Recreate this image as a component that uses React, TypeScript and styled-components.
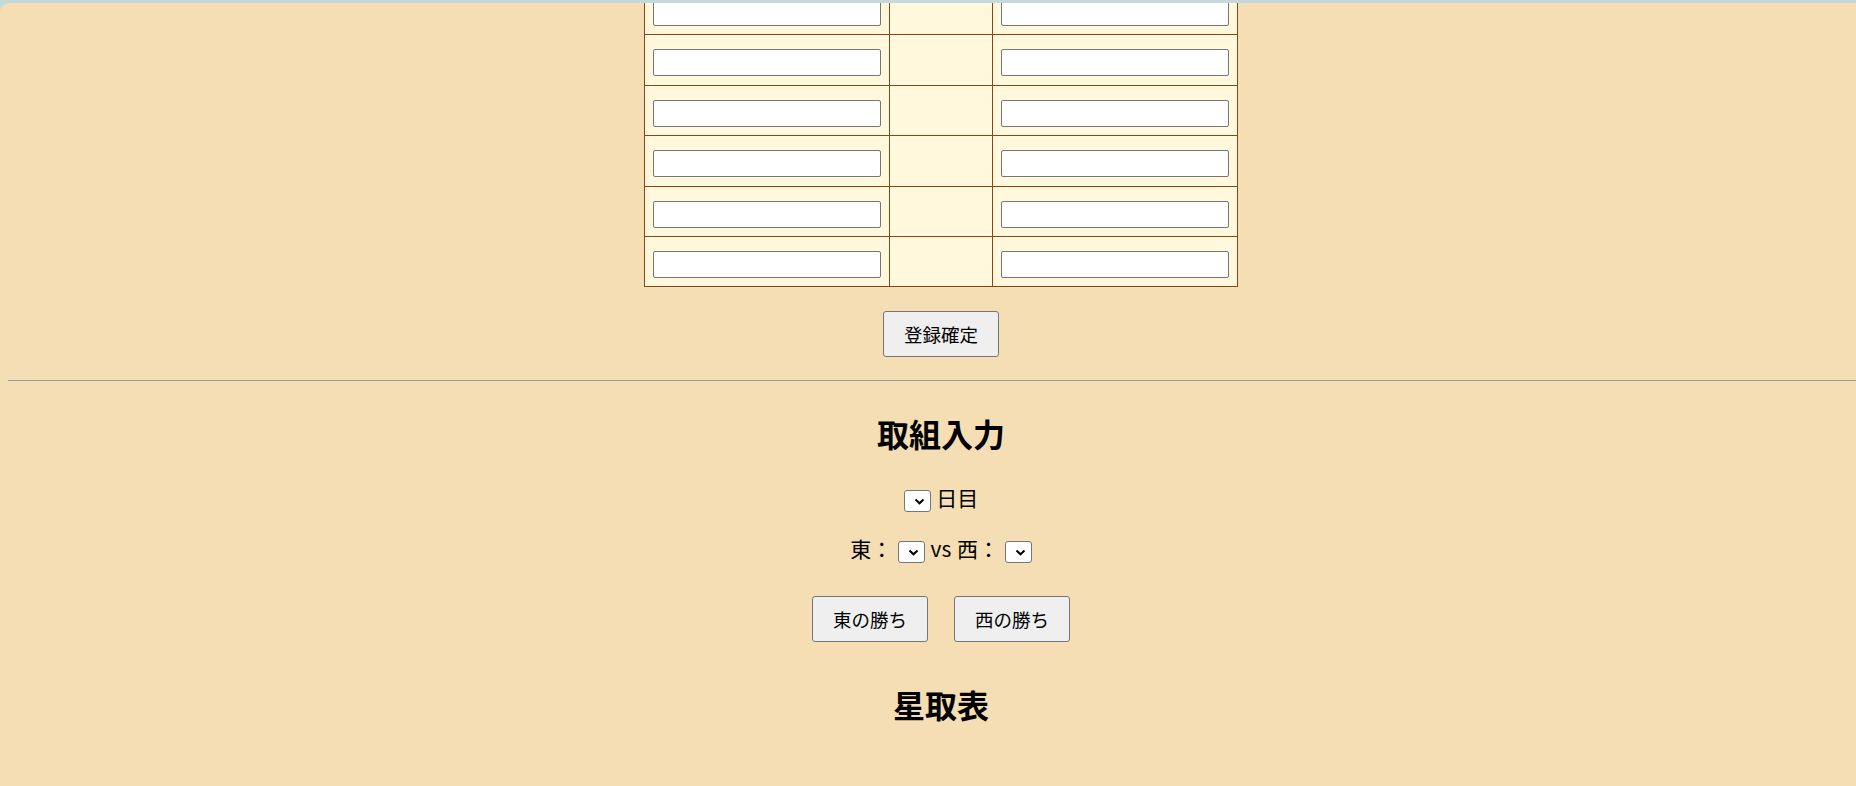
import React from "react";
import styled, { createGlobalStyle } from "styled-components";

const GlobalStyle = createGlobalStyle`
  html, body {
    margin: 0;
    padding: 0;
    overflow: hidden;
    background: #c3d9de;
  }
  body {
    font-family: "Noto Sans CJK JP", "Noto Sans", sans-serif;
    color: #000;
  }
`;

// browser window body, scrolled a little so the roster table is cut at the top
const Frame = styled.div`
  margin-top: 3px;
  width: 1882px;
  height: calc(100vh - 3px);
  background: #f5deb3;
  border-top-left-radius: 9px;
  overflow: hidden;
`;

const Page = styled.main`
  margin-top: -19px;
  padding: 0 8px;
`;

const Roster = styled.table`
  margin: 0 auto;
  border-collapse: collapse;
  background: #fff8dc;
`;

const Cell = styled.td<{ $middle?: boolean }>`
  border: 1px solid #8b4513;
  padding: ${(p) => (p.$middle ? "14px 0 8.4px" : "14px 8px 8.4px")};
  width: ${(p) => (p.$middle ? "102px" : "228px")};
`;

const NameInput = styled.input`
  display: block;
  box-sizing: border-box;
  width: 228px;
  height: 27px;
  margin: 0;
  padding: 1px 4px;
  border: 1px solid #767676;
  border-radius: 2px;
  background: #fff;
`;

const Actions = styled.div<{ $top: number }>`
  display: flex;
  justify-content: center;
  gap: 26px;
  margin-top: ${(p) => p.$top}px;
`;

const PushButton = styled.button`
  box-sizing: border-box;
  height: 46px;
  padding: 0 20px;
  font-family: "Noto Sans CJK JP", sans-serif;
  font-size: 18.5px;
  line-height: 24px;
  color: #000;
  background: #efefef;
  border: 1px solid #767676;
  border-radius: 3px;
`;

const Rule = styled.hr<{ $top: number }>`
  margin: ${(p) => p.$top}px 0 0;
  height: 0;
  border: none;
  border-top: 1px solid #9c9c9c;
`;

const SectionTitle = styled.h2<{ $top: number }>`
  margin: ${(p) => p.$top}px 0 0;
  text-align: center;
  font-size: 32px;
  font-weight: 700;
  line-height: 40px;
`;

const Line = styled.p<{ $top: number }>`
  margin: ${(p) => p.$top}px 0 0;
  text-align: center;
  font-size: 21px;
  line-height: 30px;
  word-spacing: 1px;
`;

const Picker = styled.span`
  position: relative;
  display: inline-block;
  vertical-align: middle;
  width: 27px;
  height: 22px;
`;

const PickerSelect = styled.select`
  appearance: none;
  display: block;
  box-sizing: border-box;
  width: 100%;
  height: 100%;
  margin: 0;
  padding: 0;
  border: 1px solid #767676;
  border-radius: 3px;
  background: #fff;
`;

const Chevron = styled.svg`
  position: absolute;
  left: 10px;
  top: 8px;
  pointer-events: none;
`;

const Select = () => (
  <Picker>
    <PickerSelect />
    <Chevron width="11" height="7" viewBox="0 0 11 7">
      <polyline
        points="1.5,1.5 5.5,5.3 9.5,1.5"
        fill="none"
        stroke="#000"
        strokeWidth="2"
      />
    </Chevron>
  </Picker>
);

const rows = [0, 1, 2, 3, 4, 5];

export default function App() {
  return (
    <>
      <GlobalStyle />
      <Frame>
        <Page>
          <Roster>
            <tbody>
              {rows.map((r) => (
                <tr key={r}>
                  <Cell>
                    <NameInput type="text" />
                  </Cell>
                  <Cell $middle />
                  <Cell>
                    <NameInput type="text" />
                  </Cell>
                </tr>
              ))}
            </tbody>
          </Roster>

          <Actions $top={24}>
            <PushButton>登録確定</PushButton>
          </Actions>

          <Rule $top={23} />

          <SectionTitle $top={32}>取組入力</SectionTitle>

          <Line $top={29}>
            <Select /> 日目
          </Line>

          <Line $top={21}>
            東： <Select /> vs 西： <Select />
          </Line>

          <Actions $top={33}>
            <PushButton>東の勝ち</PushButton>
            <PushButton>西の勝ち</PushButton>
          </Actions>

          <SectionTitle $top={42}>星取表</SectionTitle>
        </Page>
      </Frame>
    </>
  );
}
